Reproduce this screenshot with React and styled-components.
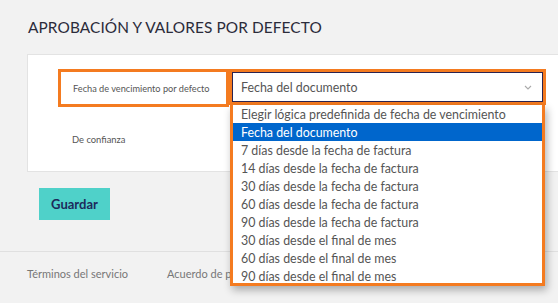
import React from 'react'
import styled, { createGlobalStyle } from 'styled-components'

const options = [
  'Elegir lógica predefinida de fecha de vencimiento',
  'Fecha del documento',
  '7 días desde la fecha de factura',
  '14 días desde la fecha de factura',
  '30 días desde la fecha de factura',
  '60 días desde la fecha de factura',
  '90 días desde la fecha de factura',
  '30 días desde el final de mes',
  '60 días desde el final de mes',
  '90 días desde el final de mes',
]

function App() {
  return (
    <>
      <GlobalStyle />
      <Page>
        <Title>APROBACIÓN Y VALORES POR DEFECTO</Title>
        <Card>
          <Row>
            <LabelBox>Fecha de vencimiento por defecto</LabelBox>
            <SelectWrap>
              <SelectBox>
                <span>Fecha del documento</span>
                <svg width="8" height="5" viewBox="0 0 8 5">
                  <path d="M1 1l3 3l3-3" fill="none" stroke="#aaa" strokeWidth="1.1" />
                </svg>
              </SelectBox>
              <Menu>
                {options.map((o, i) => (
                  <Option key={o} $active={i === 1}>{o}</Option>
                ))}
              </Menu>
            </SelectWrap>
          </Row>
          <PlainLabel>De confianza</PlainLabel>
        </Card>
        <Actions>
          <SaveButton>Guardar</SaveButton>
        </Actions>
        <Footer>
          <FooterLink>Términos del servicio</FooterLink>
          <FooterLink>Acuerdo de privacidad</FooterLink>
        </Footer>
      </Page>
    </>
  )
}

export default App

const GlobalStyle = createGlobalStyle`
    body {
        margin: 0;
        background: #f2f2f2;
        font-family: Lato, "Open Sans", sans-serif;
        overflow: hidden;
    }
`

const Page = styled.div`
    width: 558px;
    height: 303px;
    overflow: hidden;
`

const Title = styled.h2`
    margin: 0;
    padding: 18px 0 0 28px;
    height: 36px;
    font-size: 15.4px;
    font-weight: 400;
    color: #2b2b3a;
    letter-spacing: 0.1px;
`

const Card = styled.div`
    margin-left: 27px;
    height: 118px;
    background: #fff;
    border: 1px solid #e3e3e3;
    border-right: none;
    box-sizing: border-box;
    padding: 14px 0 0 30px;
`

const Row = styled.div`
    display: flex;
    align-items: flex-start;
`

const LabelBox = styled.div`
    width: 171px;
    height: 38px;
    box-sizing: border-box;
    border: 3px solid #f47b20;
    display: flex;
    align-items: center;
    padding-left: 12px;
    font-size: 9.2px;
    color: #555;
`

const SelectWrap = styled.div`
    position: relative;
    width: 317px;
`

const SelectBox = styled.div`
    height: 36px;
    box-sizing: border-box;
    border: 3px solid #f47b20;
    outline: 1px solid #2a2350;
    outline-offset: -4px;
    display: flex;
    align-items: center;
    justify-content: space-between;
    padding: 1px 11px 0 9px;
    font-size: 12.4px;
    color: #555;
`

const Menu = styled.div`
    position: absolute;
    top: 36px;
    left: 1px;
    width: 315px;
    height: 181px;
    box-sizing: border-box;
    background: #fff;
    border: 3px solid #f47b20;
    border-top: none;
    box-shadow: 2px 4px 8px rgba(0, 0, 0, 0.3);
    overflow: hidden;
    z-index: 2;
`

const Option = styled.div`
    height: 18px;
    line-height: 19px;
    padding-left: 8px;
    font-size: 12.4px;
    color: ${p => (p.$active ? '#fff' : '#555')};
    background: ${p => (p.$active ? '#0066cc' : 'transparent')};
    white-space: nowrap;
`

const PlainLabel = styled.div`
    margin: 27px 0 0 14px;
    font-size: 9.4px;
    color: #555;
`

const Actions = styled.div`
    padding: 16px 0 0 39px;
    height: 80px;
    box-sizing: border-box;
    border-bottom: 1px solid #e0e0e0;
`

const SaveButton = styled.button`
    width: 71px;
    height: 32px;
    border: none;
    background: #4fd1c9;
    color: #1d2a5b;
    font-family: inherit;
    font-size: 13px;
    font-weight: 700;
    padding: 0;
`

const Footer = styled.div`
    display: flex;
    gap: 39px;
    padding: 15px 0 0 27px;
`

const FooterLink = styled.span`
    font-size: 11px;
    color: #777;
`
